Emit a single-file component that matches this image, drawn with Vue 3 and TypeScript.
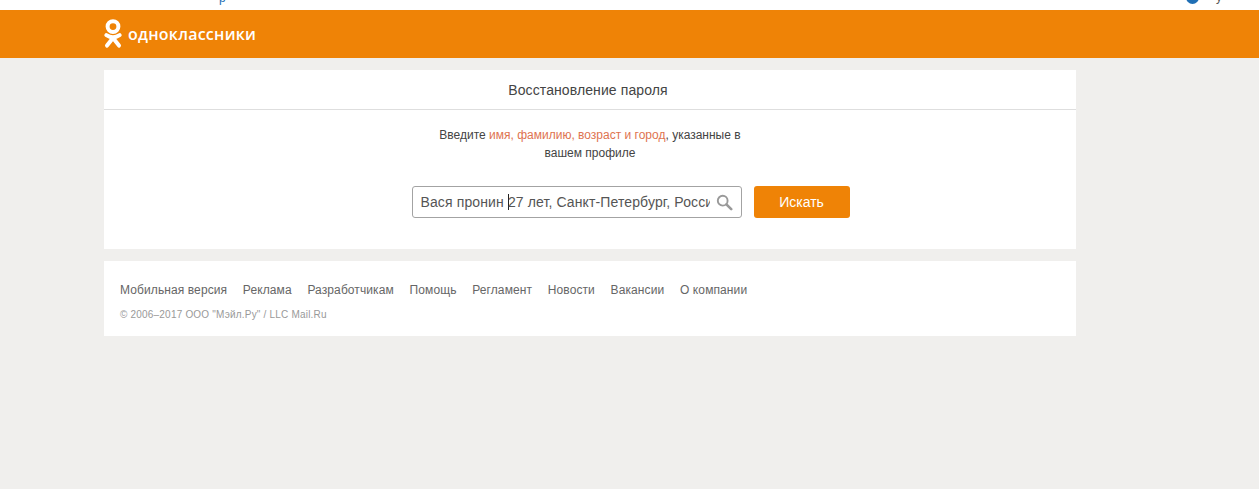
<script setup lang="ts">
// Password recovery page: top strip, orange brand bar, search card, footer card.
const footerLinks = [
  "Мобильная версия",
  "Реклама",
  "Разработчикам",
  "Помощь",
  "Регламент",
  "Новости",
  "Вакансии",
  "О компании",
];
</script>

<template>
  <div class="page">
    <div class="top-strip">
      <span class="strip-link">р</span>
      <span class="strip-globe"></span>
      <span class="strip-lang">у</span>
    </div>

    <header class="brand-bar">
      <div class="brand">
        <svg class="ok-logo" width="18" height="30" viewBox="0 0 18 30" aria-hidden="true">
          <circle cx="9" cy="7.6" r="5.4" fill="none" stroke="#fff" stroke-width="4" />
          <path d="M2.4 16.2 Q9 20.6 15.6 16.2" fill="none" stroke="#fff" stroke-width="4" stroke-linecap="round" />
          <path d="M9 19 L3 26.6 M9 19 L15 26.6" fill="none" stroke="#fff" stroke-width="4" stroke-linecap="round" />
        </svg>
        <span class="brand-name">одноклассники</span>
      </div>
    </header>

    <main class="content">
      <section class="card">
        <h1 class="card-title">Восстановление пароля</h1>
        <div class="card-body">
          <p class="hint">
            Введите <span class="accent">имя, фамилию, возраст и город</span>, указанные в<br />вашем профиле
          </p>
          <div class="search-row">
            <div class="search-box">
              <div class="search-text">Вася пронин <span class="caret"></span>27 лет, Санкт-Петербург, Россия</div>
              <svg class="search-icon" width="17" height="17" viewBox="0 0 17 17" aria-hidden="true">
                <circle cx="6.7" cy="6.7" r="4.9" fill="none" stroke="#999" stroke-width="1.9" />
                <path d="M10.4 10.4 L15.2 15.2" stroke="#999" stroke-width="2.6" stroke-linecap="round" />
              </svg>
            </div>
            <button class="search-btn" type="button">Искать</button>
          </div>
        </div>
      </section>

      <footer class="card footer">
        <nav class="footer-links">
          <a v-for="link in footerLinks" :key="link" class="footer-link">{{ link }}</a>
        </nav>
        <div class="copyright">© 2006–2017 ООО "Мэйл.Ру" / LLC Mail.Ru</div>
      </footer>
    </main>
  </div>
</template>

<style>
html,
body {
  margin: 0;
  background: #f0efed;
}
</style>

<style scoped>
.page {
  min-height: 489px;
  background: #f0efed;
  font-family: "Liberation Sans", Arial, sans-serif;
  overflow: hidden;
}

.top-strip {
  height: 10px;
  background: #fff;
  overflow: hidden;
  display: flex;
  align-items: flex-start;
  font-size: 12px;
}
.strip-link {
  margin: -9px 0 0 219px;
  color: #1f6fb5;
}
.strip-globe {
  width: 13px;
  height: 13px;
  border-radius: 50%;
  background: #1f6fb5;
  margin: -9px 0 0 auto;
}
.strip-lang {
  margin: -10px 37px 0 17px;
  color: #555;
}

.brand-bar {
  height: 48px;
  background: #ef8306;
  padding-left: 104px;
  display: flex;
  align-items: center;
}
.brand {
  display: flex;
  align-items: center;
  gap: 6px;
}
.ok-logo {
  display: block;
  margin-top: -1px;
}
.brand-name {
  color: #fff;
  font: 600 16px/1 "Open Sans", "Noto Sans", sans-serif;
  letter-spacing: 0.25px;
  margin-top: -1px;
}

.content {
  width: 972px;
  margin-left: 104px;
  padding-top: 12px;
  display: flex;
  flex-direction: column;
  gap: 12px;
}
.card {
  background: #fff;
}

.card-title {
  margin: 0;
  height: 39px;
  line-height: 40px;
  padding-right: 4px;
  border-bottom: 1px solid #dedede;
  text-align: center;
  font-size: 14px;
  font-weight: 400;
  letter-spacing: 0.1px;
  color: #444;
}
.card-body {
  height: 139px;
  padding-top: 16px;
  box-sizing: border-box;
}
.hint {
  margin: 0;
  text-align: center;
  font-size: 12px;
  line-height: 18px;
  color: #444;
}
.accent {
  color: #de7350;
}

.search-row {
  margin-top: 24px;
  display: flex;
  justify-content: center;
  gap: 12px;
  padding-left: 81px;
}
.search-box {
  width: 330px;
  height: 32px;
  box-sizing: border-box;
  border: 1px solid #a3a3a3;
  border-radius: 3px;
  padding: 0 8px;
  display: flex;
  align-items: center;
  gap: 6px;
}
.search-text {
  flex: 1;
  min-width: 0;
  white-space: nowrap;
  overflow: hidden;
  font-size: 14px;
  letter-spacing: 0.12px;
  color: #555;
}
.caret {
  display: inline-block;
  width: 1px;
  height: 16px;
  background: #222;
  vertical-align: -3px;
  margin-right: -1px;
}
.search-icon {
  flex-shrink: 0;
}
.search-btn {
  width: 96px;
  height: 32px;
  border: 0;
  border-radius: 3px;
  background: #ef8306;
  color: #fff;
  font: 14px "Liberation Sans", Arial, sans-serif;
  padding: 0;
}

.footer {
  height: 75px;
  box-sizing: border-box;
  padding: 22px 16px 0;
}
.footer-links {
  display: flex;
  gap: 15.7px;
  font-size: 12px;
  line-height: 15px;
  letter-spacing: 0.1px;
  color: #666;
}
.copyright {
  margin-top: 11px;
  font-size: 10px;
  line-height: 12px;
  letter-spacing: 0.2px;
  color: #999;
}
</style>
